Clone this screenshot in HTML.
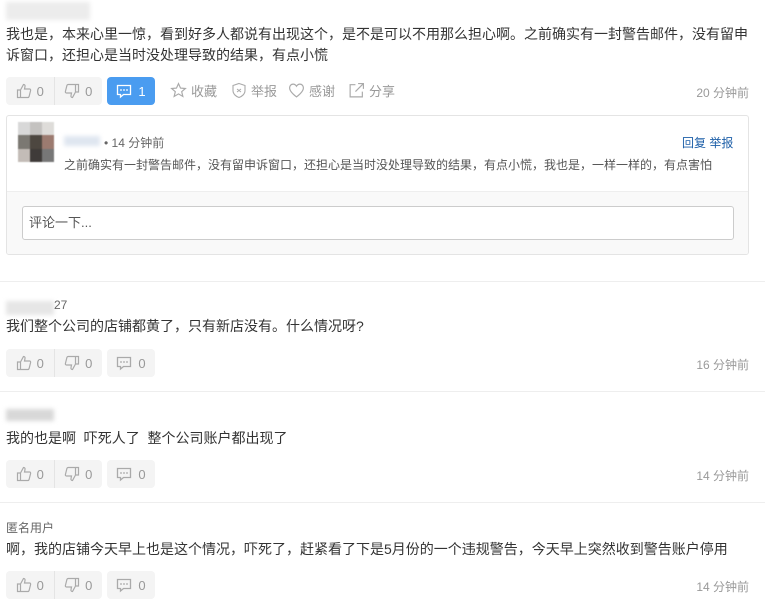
<!DOCTYPE html>
<html><head><meta charset="utf-8"><style>
*{margin:0;padding:0;box-sizing:border-box}
body{width:765px;height:611px;background:#fff;position:relative;overflow:hidden;font-family:"Liberation Sans","Noto Sans CJK SC",sans-serif;color:#333;font-size:13px}
.a{position:absolute;white-space:nowrap}
.t{font-size:14px;color:#333;line-height:21px}
.grp{position:absolute;height:28px;width:96px;background:#f4f4f4;border-radius:4px;display:flex}
.grp div{flex:1;display:flex;align-items:center;justify-content:center;gap:5px;color:#999;font-size:13px}
.grp div:first-child{border-right:1px solid #e4e4e4}
.cb{position:absolute;height:28px;width:48px;background:#f4f4f4;border-radius:4px;display:flex;align-items:center;justify-content:center;gap:6px;color:#999;font-size:13px}
.time{position:absolute;right:16px;color:#999;font-size:12px}
.sep{position:absolute;left:0;right:0;height:1px;background:#eee}
.blur{position:absolute;background:#e6e6e6;filter:blur(2px)}
svg{display:block}
.act{position:absolute;top:81px;display:flex;align-items:center;gap:4px;color:#999;font-size:13px}
</style></head><body>
<div class="blur" style="left:6px;top:2px;width:84px;height:18px;background:#ececec"></div>
<div class="a t" style="left:6px;top:24px">我也是，本来心里一惊，看到好多人都说有出现这个，是不是可以不用那么担心啊。之前确实有一封警告邮件，没有留申</div>
<div class="a t" style="left:6px;top:45px">诉窗口，还担心是当时没处理导致的结果，有点小慌</div>

<svg width="0" height="0" style="position:absolute"><defs>
<symbol id="up" viewBox="0 0 16 16"><path d="M1.5 7h3v7.5h-3zM4.5 7l3-5.5c1.2 0 1.8.8 1.5 2L8.5 6h5c.8 0 1.3.7 1.1 1.5l-1.5 6c-.2.6-.6 1-1.2 1H4.5" fill="none" stroke="#aaa" stroke-width="1.2"/></symbol>
<symbol id="dn" viewBox="0 0 16 16"><g transform="rotate(180 8 8)"><path d="M1.5 7h3v7.5h-3zM4.5 7l3-5.5c1.2 0 1.8.8 1.5 2L8.5 6h5c.8 0 1.3.7 1.1 1.5l-1.5 6c-.2.6-.6 1-1.2 1H4.5" fill="none" stroke="#aaa" stroke-width="1.2"/></g></symbol>
<symbol id="cm" viewBox="0 0 16 16"><path d="M1.5 2.5h13v9h-7l-3 2.5v-2.5h-3z" fill="none" stroke="currentColor" stroke-width="1.3"/><circle cx="5" cy="7" r=".9" fill="currentColor"/><circle cx="8" cy="7" r=".9" fill="currentColor"/><circle cx="11" cy="7" r=".9" fill="currentColor"/></symbol>
</defs></svg>

<div class="grp" style="left:6px;top:77px"><div><svg width="16" height="16"><use href="#up"/></svg>0</div><div><svg width="16" height="16"><use href="#dn"/></svg>0</div></div>
<div class="cb" style="left:107px;top:77px;background:#4a9cf0;color:#fff"><svg width="16" height="16" style="color:#fff"><use href="#cm"/></svg>1</div>
<div class="act" style="left:170px"><svg width="17" height="17" viewBox="0 0 16 16"><path d="M8 1.5l1.9 4.2 4.6.4-3.5 3 1.1 4.5L8 11.2l-4.1 2.4L5 9.1l-3.5-3 4.6-.4z" fill="none" stroke="#aaa" stroke-width="1.1"/></svg>收藏</div>
<div class="act" style="left:231px"><svg width="16" height="17" viewBox="0 0 16 16"><path d="M8 1l6 2v5c0 3.5-3 6-6 7-3-1-6-3.5-6-7V3z" fill="none" stroke="#aaa" stroke-width="1.1"/><path d="M6 6.5l4 3M10 6.5l-4 3" stroke="#aaa" stroke-width="1"/></svg>举报</div>
<div class="act" style="left:288px"><svg width="17" height="17" viewBox="0 0 16 16"><path d="M8 14S1.5 9.5 1.5 5.5C1.5 3.5 3 2 4.8 2 6.3 2 7.4 3 8 4c.6-1 1.7-2 3.2-2 1.8 0 3.3 1.5 3.3 3.5C14.5 9.5 8 14 8 14z" fill="none" stroke="#aaa" stroke-width="1.1"/></svg>感谢</div>
<div class="act" style="left:348px"><svg width="17" height="17" viewBox="0 0 16 16"><path d="M7 2.5H2v11.5h11.5V9M9.5 1.5h5v5M14.5 1.5L7 9" fill="none" stroke="#aaa" stroke-width="1.1"/></svg>分享</div>
<div class="time" style="top:84px">20 分钟前</div>

<div style="position:absolute;left:6px;top:115px;width:743px;height:140px;border:1px solid #e4e4e4;border-radius:3px;overflow:hidden">
 <div style="position:absolute;left:0;right:0;top:75px;bottom:0;background:#f9f9f9;border-top:1px solid #eee"></div>
 <div style="position:absolute;left:15px;top:90px;width:712px;height:34px;background:#fff;border:1px solid #ccc;border-radius:3px;padding-left:6px;line-height:32px;color:#555;font-size:13px">评论一下...</div>
</div>
<div class="a" style="left:18px;top:122px;width:36px;height:40px;display:grid;grid-template-columns:repeat(3,12px);filter:blur(.6px)">
<div style="background:#d8d8d8"></div><div style="background:#c4c2c0"></div><div style="background:#dedcd9"></div>
<div style="background:#7b7872"></div><div style="background:#4d4740"></div><div style="background:#9c7b70"></div>
<div style="background:#c3bcb7"></div><div style="background:#3f3b39"></div><div style="background:#777"></div></div>
<div class="blur" style="left:64px;top:136px;width:36px;height:10px;background:#dfe6f0"></div>
<div class="a" style="left:104px;top:134px;font-size:12px;color:#666">• 14 分钟前</div>
<div class="a" style="left:682px;top:134px;font-size:12px;color:#1d5fa8">回复 举报</div>
<div class="a" style="left:64px;top:156px;font-size:12px;color:#555">之前确实有一封警告邮件，没有留申诉窗口，还担心是当时没处理导致的结果，有点小慌，我也是，一样一样的，有点害怕</div>

<div class="sep" style="top:281px"></div>
<div class="blur" style="left:6px;top:301px;width:48px;height:14px"></div>
<div class="a" style="left:54px;top:298px;font-size:12px;color:#666">27</div>
<div class="a t" style="left:6px;top:316px">我们整个公司的店铺都黄了，只有新店没有。什么情况呀?</div>
<div class="grp" style="left:6px;top:349px"><div><svg width="16" height="16"><use href="#up"/></svg>0</div><div><svg width="16" height="16"><use href="#dn"/></svg>0</div></div>
<div class="cb" style="left:107px;top:349px"><svg width="16" height="16" style="color:#aaa"><use href="#cm"/></svg>0</div>
<div class="time" style="top:356px">16 分钟前</div>

<div class="sep" style="top:391px"></div>
<div class="blur" style="left:6px;top:409px;width:48px;height:12px;background:#d8d8d8"></div>
<div class="a t" style="left:6px;top:428px">我的也是啊&nbsp; 吓死人了&nbsp; 整个公司账户都出现了</div>
<div class="grp" style="left:6px;top:460px"><div><svg width="16" height="16"><use href="#up"/></svg>0</div><div><svg width="16" height="16"><use href="#dn"/></svg>0</div></div>
<div class="cb" style="left:107px;top:460px"><svg width="16" height="16" style="color:#aaa"><use href="#cm"/></svg>0</div>
<div class="time" style="top:467px">14 分钟前</div>

<div class="sep" style="top:502px"></div>
<div class="a" style="left:6px;top:519px;font-size:12px;color:#666">匿名用户</div>
<div class="a t" style="left:6px;top:539px">啊，我的店铺今天早上也是这个情况，吓死了，赶紧看了下是5月份的一个违规警告，今天早上突然收到警告账户停用</div>
<div class="grp" style="left:6px;top:571px"><div><svg width="16" height="16"><use href="#up"/></svg>0</div><div><svg width="16" height="16"><use href="#dn"/></svg>0</div></div>
<div class="cb" style="left:107px;top:571px"><svg width="16" height="16" style="color:#aaa"><use href="#cm"/></svg>0</div>
<div class="time" style="top:578px">14 分钟前</div>
</body></html>
